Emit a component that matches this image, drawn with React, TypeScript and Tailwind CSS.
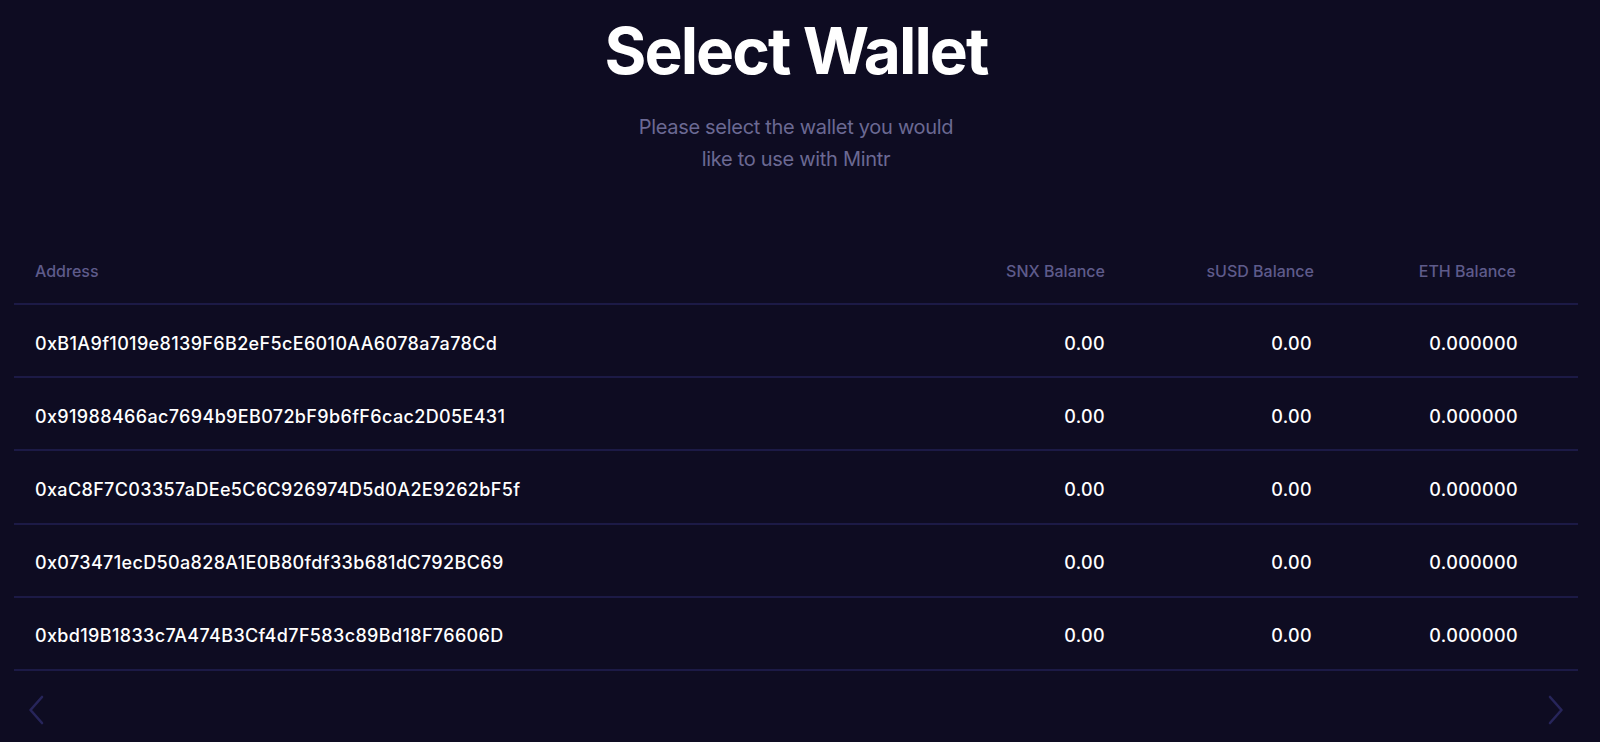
import React from "react";

const rows = [
  "0xB1A9f1019e8139F6B2eF5cE6010AA6078a7a78Cd",
  "0x91988466ac7694b9EB072bF9b6fF6cac2D05E431",
  "0xaC8F7C03357aDEe5C6C926974D5d0A2E9262bF5f",
  "0x073471ecD50a828A1E0B80fdf33b681dC792BC69",
  "0xbd19B1833c7A474B3Cf4d7F583c89Bd18F76606D",
];

function Chevron({ dir }: { dir: "left" | "right" }) {
  return (
    <svg width="16" height="30" viewBox="0 0 16 30" fill="none">
      <path
        d={dir === "left" ? "M14 2 L2.5 15 L14 28" : "M2 2 L13.5 15 L2 28"}
        stroke="#27255a"
        strokeWidth="2.6"
        strokeLinecap="round"
        strokeLinejoin="round"
      />
    </svg>
  );
}

export default function App() {
  return (
    <div
      className="w-[1600px] h-[742px] bg-[#0e0c22] text-white overflow-hidden"
      style={{ fontFamily: "Inter, 'Noto Sans', sans-serif" }}
    >
      <div className="w-[1592px] px-[14px] flex flex-col">
        <h1 className="text-center text-[64px] font-bold leading-none mt-[19px] tracking-[-1.9px]">
          Select Wallet
        </h1>
        <p className="mx-auto mt-[28px] w-[330px] text-center text-[20px] leading-[32px] tracking-[-0.3px] text-[#6b6993]">
          Please select the wallet you would like to use with Mintr
        </p>
        <div className="mt-[63px]">
          <div className="grid grid-cols-[1fr_200px_209px_264px] h-[67px] items-center border-b-2 border-[#1c1a46] text-[16px] font-medium text-[#5e5b8b]">
            <div className="pl-[21px]">Address</div>
            <div className="text-right">SNX Balance</div>
            <div className="text-right">sUSD Balance</div>
            <div className="text-right pr-[62px]">ETH Balance</div>
          </div>
          {rows.map((r) => (
            <div
              key={r}
              className="grid grid-cols-[1fr_200px_209px_264px] h-[73.2px] pt-[5px] items-center border-b-2 border-[#1c1a46] text-[18px] font-medium tracking-[0.35px] text-white"
            >
              <div className="pl-[21px]">{r}</div>
              <div className="text-right">0.00</div>
              <div className="text-right pr-[2px]">0.00</div>
              <div className="text-right pr-[60px]">0.000000</div>
            </div>
          ))}
          <div className="flex justify-between mt-[24px] px-[14px]">
            <Chevron dir="left" />
            <Chevron dir="right" />
          </div>
        </div>
      </div>
    </div>
  );
}
